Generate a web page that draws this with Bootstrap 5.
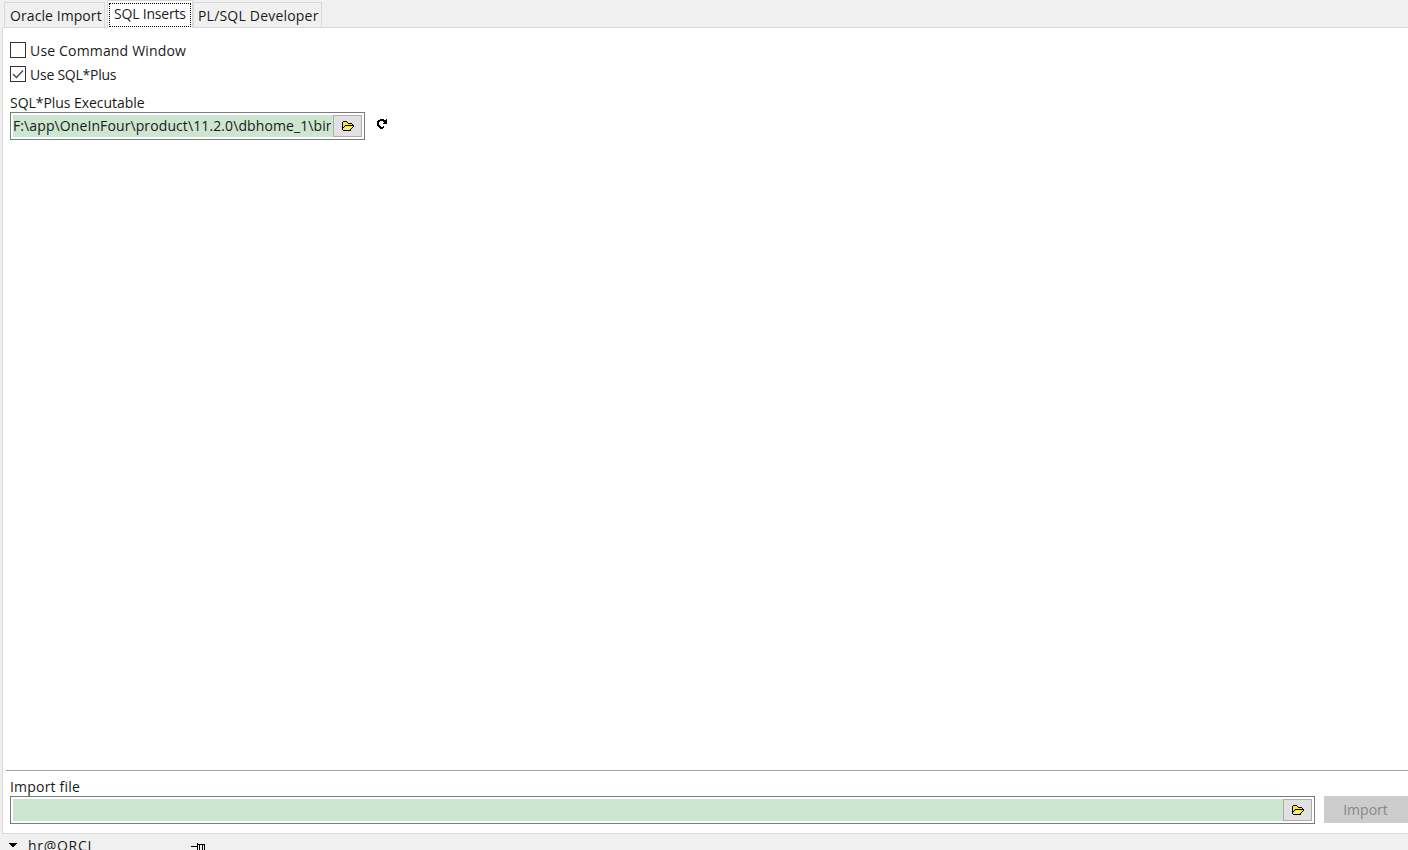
<!DOCTYPE html>
<html lang="en">
<head>
<meta charset="utf-8">
<title>SQL Inserts</title>
<link href="https://cdn.jsdelivr.net/npm/bootstrap@5.3.0/dist/css/bootstrap.min.css" rel="stylesheet">
<style>
html,body{height:850px;overflow:hidden}
body{background:#f0f0f0;color:#1a1a1a;font-family:"Open Sans","Noto Sans","Liberation Sans",sans-serif;font-size:14px;line-height:20px}
.win{height:850px;width:1408px}
.tabstrip{height:28px;padding-left:4px;align-items:flex-end;flex-wrap:nowrap;border:0;position:relative;z-index:1}
.tabstrip .nav-link{height:25px;margin:0 0 1px;padding:2px 2px 0 5px;border:1px solid #d9d9d9;border-bottom:0;border-radius:0;background:#f0f0f0;color:#1a1a1a;font-size:14px;line-height:21px;white-space:nowrap}
.tabstrip .tab-a{width:101px;letter-spacing:.08px}
.tabstrip .tab-c{width:129px;padding-left:4px;letter-spacing:.2px}
.tabstrip .nav-link.active{height:28px;width:86px;margin:0 0 0 2px;padding:1px;background:#fff;color:#1a1a1a;border:1px solid #d9d9d9;border-bottom:0}
.tab-focus{display:block;height:24px;border:1px dotted #000;padding-left:4px;line-height:20px;margin-top:1px;letter-spacing:-.2px}
.pane{flex:1 1 auto;margin-left:2px;background:#fff;border:1px solid #d9d9d9;border-right:0;margin-top:-1px;min-height:0}
.opts{flex:1 1 auto;padding:14px 0 0 7px}
.chk{min-height:0;height:16px;padding:0;margin:0 0 8px;gap:4px}
.chk .form-check-input{float:none;width:16px;height:16px;margin:0;border:1px solid #333;border-radius:0;flex:none}
.chk .form-check-input:checked{background-color:#fff;border-color:#333;background-image:url("data:image/svg+xml,%3csvg xmlns='http://www.w3.org/2000/svg' viewBox='0 0 14 14'%3e%3cpath fill='none' stroke='%23444' stroke-width='1.3' d='M2 7l3.5 3.5L12 3.5'/%3e%3c/svg%3e");background-size:14px 14px}
.chk .form-check-input:focus{box-shadow:none}
.chk .form-check-label{line-height:16px;font-size:14px;margin-top:2px}
.lbl-wide{letter-spacing:.17px}
.lbl-tight{letter-spacing:-.25px}
.lbl-file{letter-spacing:.2px}
.fld-label{display:block;margin:0;line-height:18px;height:18px;font-size:14px}
.fld-label.lbl-exe{letter-spacing:-.05px;margin-top:12px}
.filebox{height:28px;border:1px solid #7a7a7a;padding:2px;background:#fff}
.filebox .form-control{flex:1 1 auto;min-width:0;height:22px;border:0;border-radius:0;background:#cde6d0;padding:0 2px 0 0;font-size:14px;line-height:22px;color:#1a1a1a;overflow:hidden;font-family:inherit;letter-spacing:.1px}
.filebox .btn{width:29px;height:22px;padding:0;flex:none;border:1px solid #adadad;border-radius:0;background:#e1e1e1;display:flex;align-items:center;justify-content:center}
.box-sm{width:355px}
.reload{margin:7px 0 0 12px}
.foot{height:63px;flex:none;border-top:1px solid #a0a0a0;margin-left:3px;padding:7px 0 0 4px}
.foot .row-imp{gap:9px}
.foot .filebox{flex:1 1 auto}
.btn-imp{width:84px;height:27px;padding:0 1px 0 0;border:1px solid #cccccc;border-radius:0;background:#cccccc;color:#888;font-size:14px;line-height:25px;opacity:1}
.btn-imp:disabled{background:#cccccc;color:#888;border-color:#ccc;opacity:1}
.status{height:16px;flex:none;padding:1px 0 0 9px;overflow:hidden;line-height:18px;font-size:14px}
.status-name{margin:2px 0 0 11px;width:163px;white-space:nowrap;letter-spacing:.7px}
</style>
</head>
<body>
<div class="win d-flex flex-column">
  <ul class="nav nav-tabs tabstrip">
    <li class="nav-item"><a class="nav-link tab-a" href="#">Oracle Import</a></li>
    <li class="nav-item"><a class="nav-link active" href="#"><span class="tab-focus">SQL Inserts</span></a></li>
    <li class="nav-item"><a class="nav-link tab-c" href="#">PL/SQL Developer</a></li>
  </ul>
  <div class="pane d-flex flex-column">
    <div class="opts">
      <div class="form-check d-flex align-items-center chk">
        <input class="form-check-input" type="checkbox" id="c1">
        <label class="form-check-label lbl-wide" for="c1">Use Command Window</label>
      </div>
      <div class="form-check d-flex align-items-center chk">
        <input class="form-check-input" type="checkbox" id="c2" checked>
        <label class="form-check-label lbl-tight" for="c2">Use SQL*Plus</label>
      </div>
      <label class="fld-label lbl-exe" for="t1">SQL*Plus Executable</label>
      <div class="d-flex align-items-start">
        <div class="filebox box-sm d-flex">
          <input class="form-control" id="t1" type="text" value="F:\app\OneInFour\product\11.2.0\dbhome_1\bin\sqlplus.exe">
          <button class="btn" type="button" aria-label="Browse">
            <svg width="12" height="10" viewBox="0 0 12 10" shape-rendering="crispEdges"><path fill="#f5e63c" d="M1 1h4v1h1v1h4v1H3v1H2v1H1zM3 5h8v1h-1v1H9v1H8v1H2V6h1z"/><path fill="#fffbb0" d="M4 6h1v1H4zM6 6h1v1H6zM8 6h1v1H8zM3 7h1v1H3zM5 7h1v1H5zM7 7h1v1H7zM4 8h1v1H4zM6 8h1v1H6z"/><path fill="#000" d="M1 0h4v1H1zM0 1h1v8H0zM5 1h1v1H5zM6 2h4v1H6zM10 3h1v1h-1zM3 4h9v1H3zM2 5h1v1H2zM11 5h1v1h-1zM10 6h1v1h-1zM9 7h1v1H9zM8 8h1v1H8zM1 9h8v1H1zM1 6h1v1H1z"/></svg>
          </button>
        </div>
        <svg class="reload" width="10" height="10" viewBox="0 0 10 10" shape-rendering="crispEdges"><path fill="#000" d="M3 0h4v1H3zM9 0h1v1H9zM1 1h9v1H1zM0 2h3v1H0zM6 2h4v1H6zM0 3h2v1H0zM7 3h3v1H7zM0 4h2v1H0zM6 4h4v1H6zM0 5h2v1H0zM0 6h3v1H0zM1 7h3v1H1zM6 7h1v1H6zM2 8h5v1H2zM3 9h3v1H3z"/></svg>
      </div>
    </div>
    <div class="foot">
      <label class="fld-label lbl-file" for="t2">Import file</label>
      <div class="d-flex align-items-start row-imp">
        <div class="filebox d-flex">
          <input class="form-control" id="t2" type="text">
          <button class="btn" type="button" aria-label="Browse">
            <svg width="12" height="10" viewBox="0 0 12 10" shape-rendering="crispEdges"><path fill="#f5e63c" d="M1 1h4v1h1v1h4v1H3v1H2v1H1zM3 5h8v1h-1v1H9v1H8v1H2V6h1z"/><path fill="#fffbb0" d="M4 6h1v1H4zM6 6h1v1H6zM8 6h1v1H8zM3 7h1v1H3zM5 7h1v1H5zM7 7h1v1H7zM4 8h1v1H4zM6 8h1v1H6z"/><path fill="#000" d="M1 0h4v1H1zM0 1h1v8H0zM5 1h1v1H5zM6 2h4v1H6zM10 3h1v1h-1zM3 4h9v1H3zM2 5h1v1H2zM11 5h1v1h-1zM10 6h1v1h-1zM9 7h1v1H9zM8 8h1v1H8zM1 9h8v1H1zM1 6h1v1H1z"/></svg>
          </button>
        </div>
        <button class="btn btn-imp" type="button" disabled>Import</button>
      </div>
    </div>
  </div>
  <div class="status d-flex align-items-start">
    <svg class="mt-2" width="8" height="5" viewBox="0 0 8 5" shape-rendering="crispEdges"><path fill="#000" d="M0 0h8v1H7v1H6v1H5v1H3V3H2V2H1V1H0z"/></svg>
    <span class="status-name">hr@ORCL</span>
    <svg class="mt-2" width="15" height="8" viewBox="0 0 15 8" shape-rendering="crispEdges"><path fill="#000" d="M0 3h6v1H0zM6 0h1v8H6zM7 1h7v1H7zM8 2h1v6H8zM13 2h1v6h-1zM11 2h1v6h-1z"/></svg>
  </div>
</div>
<script src="https://cdn.jsdelivr.net/npm/bootstrap@5.3.0/dist/js/bootstrap.bundle.min.js"></script>
</body>
</html>
